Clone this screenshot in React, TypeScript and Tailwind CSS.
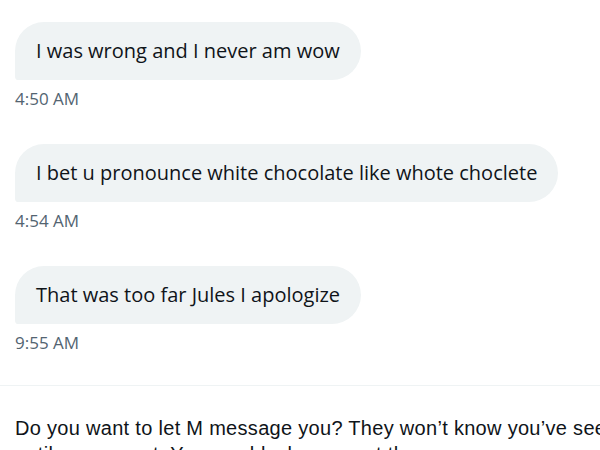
const messages = [
  { text: 'I was wrong and I never am wow', time: '4:50 AM' },
  { text: 'I bet u pronounce white chocolate like whote choclete', time: '4:54 AM' },
  { text: 'That was too far Jules I apologize', time: '9:55 AM' },
];

export default function App() {
  return (
    <div className="h-[450px] w-[600px] overflow-hidden bg-white font-['Open_Sans',sans-serif] text-[#0f1419]">
      <div className="flex flex-col px-[15px] pt-[22px]">
        {messages.map((m) => (
          <div key={m.time} className="flex flex-col items-start pb-[34px]">
            <div className="rounded-[32px] rounded-bl-[4px] bg-[#eff3f4] px-[21px] py-[16px] text-[20px] leading-[26px]">
              {m.text}
            </div>
            <div className="mt-[8px] text-[17px] leading-[22px] text-[#536471]">{m.time}</div>
          </div>
        ))}
      </div>
      <div className="-mt-[3px] border-t border-[#eff3f4] px-[15px] pt-[29px]">
        <p className="whitespace-nowrap font-['Liberation_Sans',sans-serif] text-[20px] leading-[26px] tracking-[0.3px] text-[#0f1419]">
          Do you want to let M message you? They won’t know you’ve seen it until you accept.
        </p>
        <p className="whitespace-nowrap font-['Liberation_Sans',sans-serif] text-[20px] leading-[26px] tracking-[0.3px] text-[#0f1419]">
          until you accept. You can block or report them.
        </p>
      </div>
    </div>
  );
}
